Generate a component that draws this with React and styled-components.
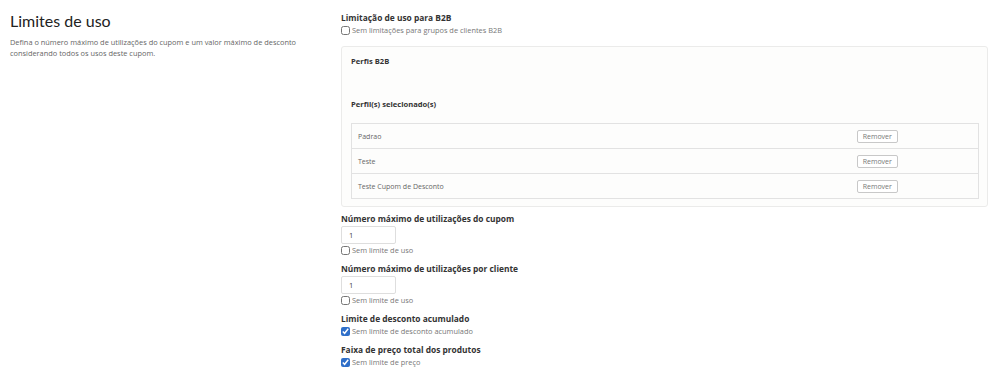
import React from 'react';
import styled, { createGlobalStyle } from 'styled-components';

const GlobalStyle = createGlobalStyle`
	html, body {
		margin: 0;
		padding: 0;
		background: #ffffff;
	}
	body {
		font-family: "Open Sans", "Liberation Sans", sans-serif;
		color: #333;
	}
`;

const perfis = ['Padrao', 'Teste', 'Teste Cupom de Desconto'];

const Checkbox = ({ label, marcado }) => (
	<LinhaCheck>
		<input type="checkbox" defaultChecked={marcado} />
		<span>{label}</span>
	</LinhaCheck>
);

const App = () => {
	return (
		<>
			<GlobalStyle />
			<Pagina>
				<Intro>
					<Titulo>Limites de uso</Titulo>
					<Descricao>
						Defina o número máximo de utilizações do cupom e um valor máximo de desconto
						considerando todos os usos deste cupom.
					</Descricao>
				</Intro>

				<Formulario>
					<Grupo>
						<Rotulo>Limitação de uso para B2B</Rotulo>
						<Checkbox label="Sem limitações para grupos de clientes B2B" />
					</Grupo>

					<Painel>
						<SubTitulo>Perfis B2B</SubTitulo>
						<SubTitulo espaco="31px">Perfil(s) selecionado(s)</SubTitulo>
						<Tabela>
							{perfis.map((nome) => (
								<Linha key={nome}>
									<Nome>{nome}</Nome>
									<CelulaAcao>
										<BotaoRemover>Remover</BotaoRemover>
									</CelulaAcao>
								</Linha>
							))}
						</Tabela>
					</Painel>

					<Grupo>
						<Rotulo>Número máximo de utilizações do cupom</Rotulo>
						<Campo defaultValue="1" />
						<Checkbox label="Sem limite de uso" />
					</Grupo>

					<Grupo>
						<Rotulo>Número máximo de utilizações por cliente</Rotulo>
						<Campo defaultValue="1" />
						<Checkbox label="Sem limite de uso" />
					</Grupo>

					<Grupo>
						<Rotulo>Limite de desconto acumulado</Rotulo>
						<Checkbox label="Sem limite de desconto acumulado" marcado />
					</Grupo>

					<Grupo>
						<Rotulo>Faixa de preço total dos produtos</Rotulo>
						<Checkbox label="Sem limite de preço" marcado />
					</Grupo>
				</Formulario>
			</Pagina>
		</>
	);
}

export default App;


const Pagina = styled.div`
	display: grid;
	grid-template-columns: 332px 647px;
	padding: 12px 0 0 9px;
	width: 1000px;
	box-sizing: border-box;
`;

const Intro = styled.div`
	display: flex;
	flex-direction: column;
`;

const Titulo = styled.h2`
	margin: -1px 0 0 1px;
	font-family: Lato, "Open Sans", sans-serif;
	font-size: 16px;
	font-weight: 400;
	line-height: 20px;
	color: #222;
`;

const Descricao = styled.p`
	margin: 6px 0 0 1px;
	font-size: 7.4px;
	line-height: 11px;
	color: #666;
	width: 300px;
`;

const Formulario = styled.div`
	display: flex;
	flex-direction: column;
	gap: 7px;
`;

const Grupo = styled.div`
	display: flex;
	flex-direction: column;
	align-items: flex-start;
`;

const Rotulo = styled.label`
	font-size: 8.4px;
	font-weight: 700;
	line-height: 12px;
	color: #333;
`;

const LinhaCheck = styled.label`
	display: flex;
	align-items: center;
	gap: 2px;
	height: 12px;
	font-size: 7.4px;
	color: #777;
	input {
		width: 9px;
		height: 9px;
		margin: 0;
		accent-color: #2f6fc9;
	}
`;

const Campo = styled.input`
	width: 55px;
	height: 18px;
	margin-top: 1px;
	box-sizing: border-box;
	border: 1px solid #dedede;
	border-radius: 2px;
	padding: 0 7px;
	font-family: inherit;
	font-size: 7.5px;
	color: #444;
	background: #fff;
	outline: none;
`;

const Painel = styled.div`
	margin: 3px 0 -1px;
	background: #fdfdfc;
	border: 1px solid #ebebea;
	border-radius: 3px;
	padding: 8px 8px 7px 9px;
	display: flex;
	flex-direction: column;
`;

const SubTitulo = styled.div`
	font-size: 7.6px;
	font-weight: 700;
	line-height: 12px;
	color: #333;
	margin-top: ${props => props.espaco ? props.espaco : '0'};
	margin-bottom: ${props => props.espaco ? '13px' : '0'};
`;

const Tabela = styled.div`
	border: 1px solid #e2e2e2;
	border-bottom: none;
	background: #fdfdfc;
`;

const Linha = styled.div`
	display: grid;
	grid-template-columns: 80% 20%;
	align-items: center;
	height: 24px;
	border-bottom: 1px solid #e2e2e2;
`;

const Nome = styled.div`
	padding-left: 6px;
	font-size: 7px;
	color: #666;
`;

const CelulaAcao = styled.div`
	display: flex;
	align-items: center;
	padding-left: 4px;
`;

const BotaoRemover = styled.button`
	width: 41px;
	height: 13px;
	padding: 0;
	font-family: inherit;
	font-size: 7px;
	line-height: 11px;
	color: #777;
	background: #fff;
	border: 1px solid #c8c8c8;
	border-radius: 2px;
	cursor: pointer;
`;
